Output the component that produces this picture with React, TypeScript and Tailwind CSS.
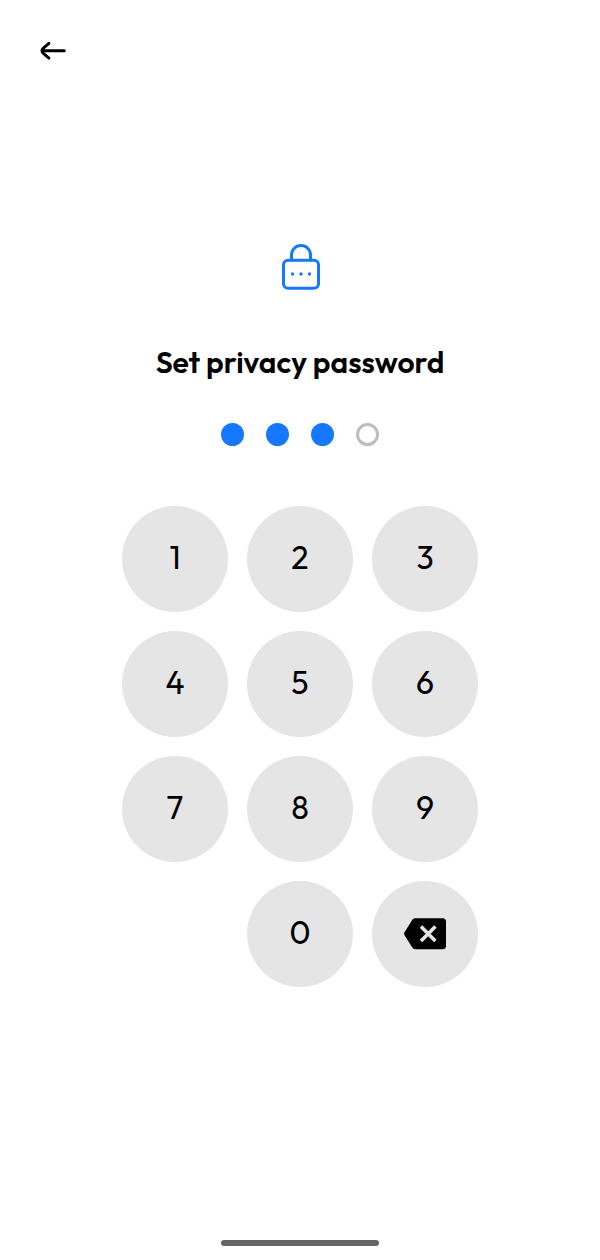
import { useState } from 'react';

const PIN_LENGTH = 4;
const DIGITS = ['1', '2', '3', '4', '5', '6', '7', '8', '9', '0'];

function BackIcon() {
  return (
    <svg viewBox="0 0 32 32" className="w-8 h-8" fill="none" stroke="currentColor" strokeWidth="3" strokeLinecap="round" strokeLinejoin="round" aria-hidden="true">
      <path d="M28.3 15.7H6.3" />
      <path d="M12.9 8.3L7.4 13.1Q4.6 15.7 7.4 18.3L12.9 23.1" />
    </svg>
  );
}

function LockIcon() {
  return (
    <svg viewBox="0 0 40 48" className="w-10 h-12" fill="none" stroke="currentColor" strokeWidth="3" strokeLinecap="round" aria-hidden="true">
      <path d="M11.5 18V13a9.5 9.5 0 0 1 19 0v5" />
      <rect x="3.5" y="18.3" width="35" height="28" rx="4.5" />
      <g fill="currentColor" stroke="none">
        <circle cx="12.5" cy="32" r="1.7" />
        <circle cx="21" cy="32" r="1.7" />
        <circle cx="29.5" cy="32" r="1.7" />
      </g>
    </svg>
  );
}

function BackspaceIcon() {
  return (
    <svg viewBox="0 0 44 32" className="w-11 h-8" aria-hidden="true">
      <path
        d="M12 0.2H39.5Q43 0.2 43 3.7V27.7Q43 31.2 39.5 31.2H12Q10.4 31.2 9.3 29.6L1.4 16.9Q0.7 15.7 1.4 14.5L9.3 1.8Q10.4 0.2 12 0.2Z"
        fill="currentColor"
      />
      <path d="M18 8.5L32.4 22.9M32.4 8.5L18 22.9" stroke="#e5e5e5" strokeWidth="3.6" />
    </svg>
  );
}

export default function App() {
  const [pin, setPin] = useState('123');

  const addDigit = (digit: string) => {
    setPin(prev => (prev.length < PIN_LENGTH ? prev + digit : prev));
  };

  return (
    <div className="min-h-screen flex flex-col bg-white text-black font-['Outfit',Lato,sans-serif]">
      <header className="flex px-9 pt-[35px]">
        <button type="button" aria-label="Back">
          <BackIcon />
        </button>
      </header>

      <main className="flex flex-col items-center mt-[175px]">
        <div className="text-[#1677ff]">
          <LockIcon />
        </div>
        <h1 className="mt-[54px] text-[30px] leading-9 font-semibold text-center">Set privacy password</h1>

        {/* Entered digits */}
        <div className="flex gap-[22px] mt-[43px]" role="status" aria-label={`${pin.length} of ${PIN_LENGTH} digits entered`}>
          {Array.from({ length: PIN_LENGTH }, (_, i) => (
            <span
              key={i}
              className={`w-[23px] h-[23px] rounded-full ${
                i < pin.length ? 'bg-[#1677ff]' : 'border-3 border-[#bdbdbd]'
              }`}
            />
          ))}
        </div>

        {/* Keypad */}
        <div className="grid grid-cols-3 gap-[19px] mt-[60px]">
          {DIGITS.map(digit => (
            <button
              key={digit}
              type="button"
              onClick={() => addDigit(digit)}
              className={`w-[106px] h-[106px] pb-1 rounded-full bg-[#e5e5e5] text-[32px] leading-10 ${
                digit === '0' ? 'col-start-2' : ''
              }`}
            >
              {digit}
            </button>
          ))}
          <button
            type="button"
            aria-label="Delete"
            onClick={() => setPin(prev => prev.slice(0, -1))}
            className="w-[106px] h-[106px] rounded-full bg-[#e5e5e5] flex items-center justify-center"
          >
            <BackspaceIcon />
          </button>
        </div>
      </main>

      {/* Home indicator */}
      <div className="mt-auto mx-auto mb-[14px] w-[158px] h-[6px] rounded-full bg-[#666666]" />
    </div>
  );
}
